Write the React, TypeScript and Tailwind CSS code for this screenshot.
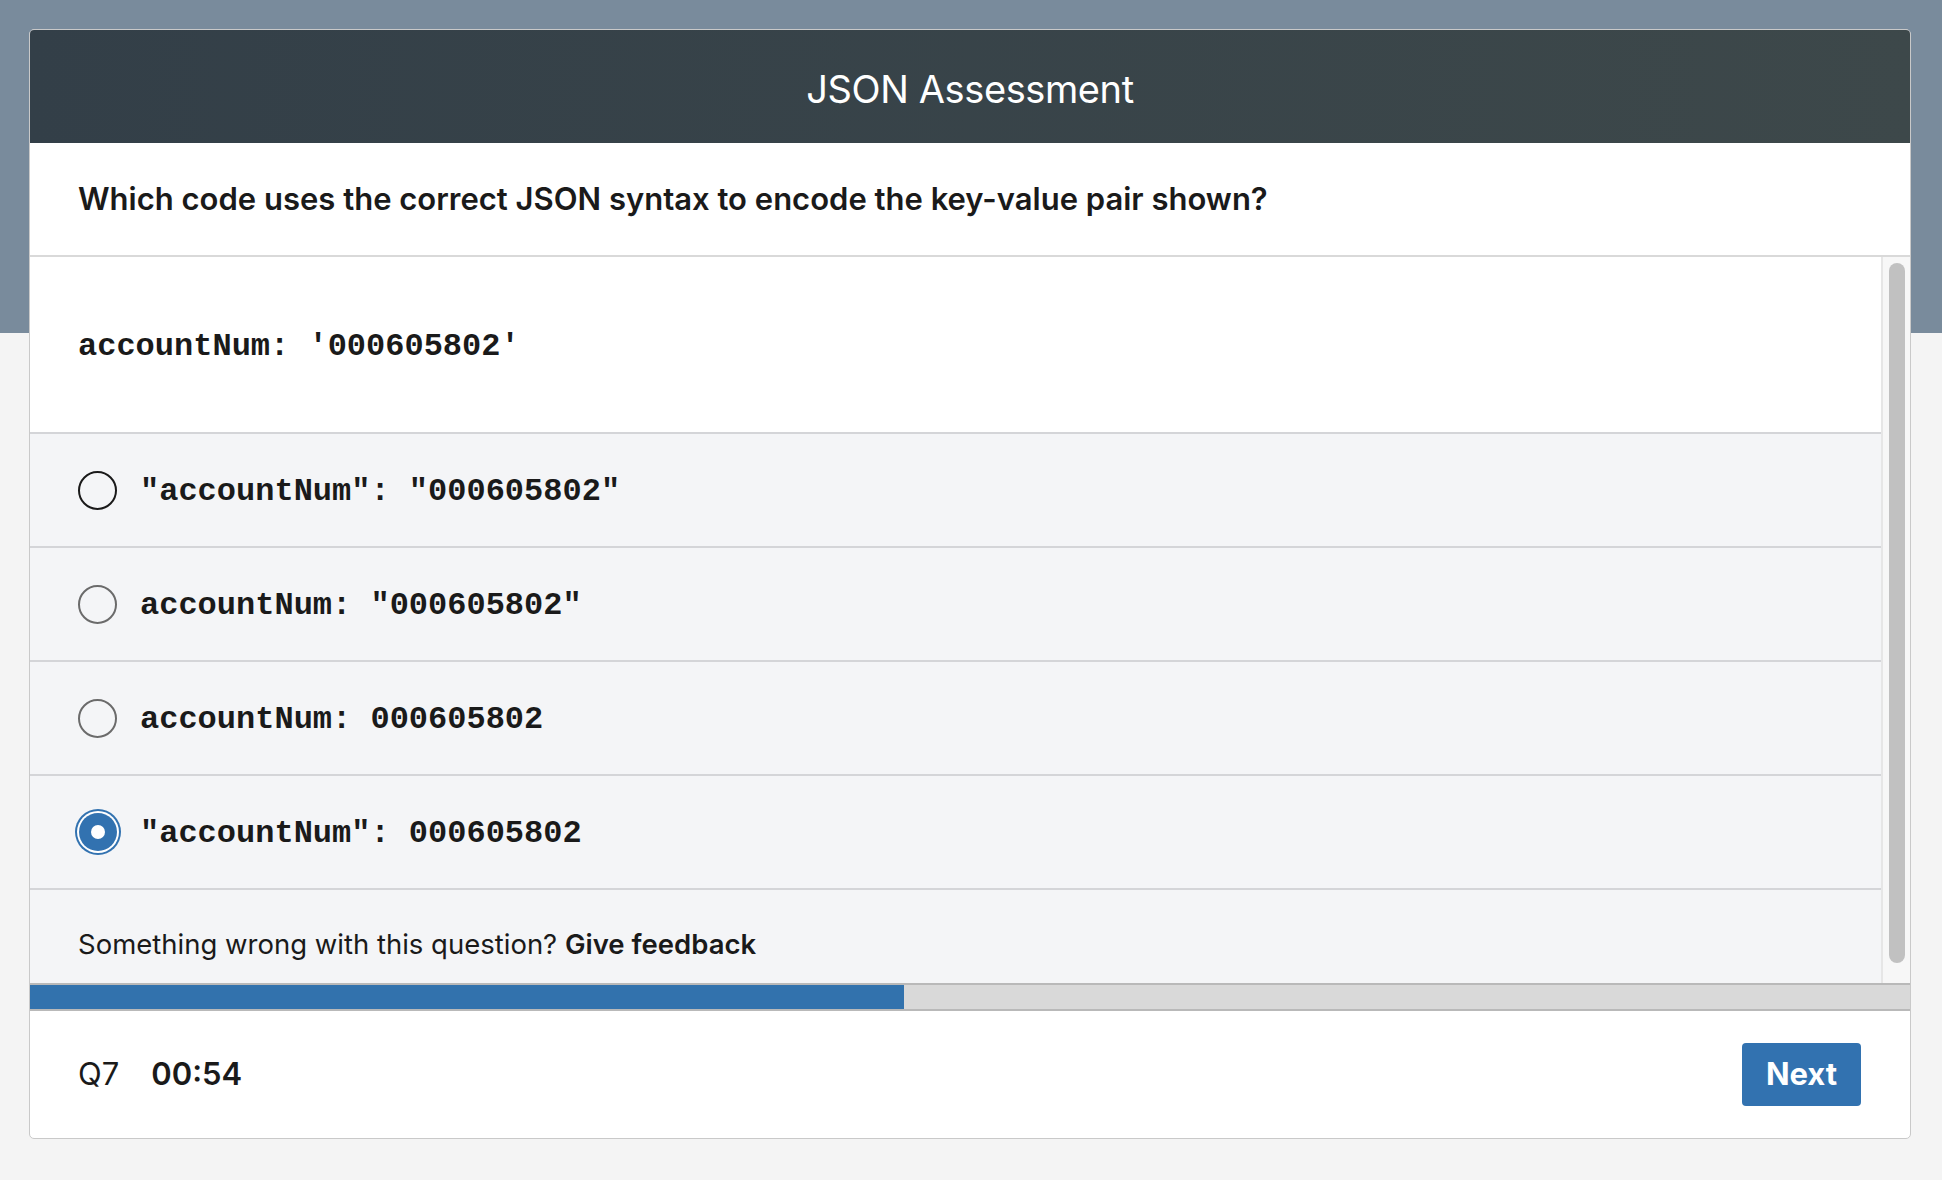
import React from "react";

const sans = { fontFamily: "Inter, 'Liberation Sans', Arial, sans-serif" };
const mono = { fontFamily: "'Liberation Mono', 'Courier New', monospace" };

function Radio({ state }: { state: "dark" | "gray" | "selected" }) {
  if (state === "selected") {
    return (
      <div className="w-[39px] h-[39px] flex items-center justify-center shrink-0">
        <div className="w-[46px] h-[46px] rounded-full bg-[#3272b0] flex items-center justify-center shrink-0">
          <div className="w-[42px] h-[42px] rounded-full bg-white flex items-center justify-center">
            <div className="w-[38px] h-[38px] rounded-full bg-[#3272b0] flex items-center justify-center">
              <div className="w-[14px] h-[14px] rounded-full bg-white" />
            </div>
          </div>
        </div>
      </div>
    );
  }
  return (
    <div
      className={
        state === "dark"
          ? "w-[39px] h-[39px] rounded-full border-2 border-[#1a1a1a] shrink-0"
          : "w-[39px] h-[39px] rounded-full border-2 border-[#6b6b6b] shrink-0"
      }
    />
  );
}

function Option({ text, state }: { text: string; state: "dark" | "gray" | "selected" }) {
  return (
    <div className="h-[114px] border-b-2 border-[#d4d5d8] bg-[#f4f5f7] flex items-center pl-[48px] gap-[23px]">
      <Radio state={state} />
      <span className="text-[32px] font-bold text-[#1a1a1a] whitespace-pre pt-[3px]" style={mono}>
        {text}
      </span>
    </div>
  );
}

export default function App() {
  return (
    <div
      className="w-full h-[1180px] bg-[linear-gradient(to_bottom,#798b9c_0px,#798b9c_333px,#f4f4f4_333px)] pt-[29px]"
      style={sans}
    >
      <div className="ml-[29px] w-[1882px] rounded-[5px] border border-[#c9c9c9] overflow-hidden bg-white">
        <div className="h-[113px] bg-[linear-gradient(to_right,#333f48,#3d484a)] flex items-center justify-center pt-[6px]">
          <h1 className="text-[38px] text-white font-normal tracking-[-0.4px]">JSON Assessment</h1>
        </div>
        <div className="h-[114px] border-b-2 border-[#d9d9d9] flex items-center pl-[48px]">
          <p className="text-[31px] font-semibold text-[#1a1a1a] tracking-[0px]">
            Which code uses the correct JSON syntax to encode the key-value pair shown?
          </p>
        </div>
        <div className="flex h-[726px]">
          <div className="flex-1 flex flex-col">
            <div className="h-[177px] border-b-2 border-[#d4d5d8] bg-white flex items-center pl-[48px] pt-[5px]">
              <span className="text-[32px] font-bold text-[#1a1a1a] whitespace-pre" style={mono}>
                {"accountNum: '000605802'"}
              </span>
            </div>
            <Option text={'"accountNum": "000605802"'} state="dark" />
            <Option text={'accountNum: "000605802"'} state="gray" />
            <Option text={"accountNum: 000605802"} state="gray" />
            <Option text={'"accountNum": 000605802'} state="selected" />
            <div className="flex-1 bg-[#f4f5f7] flex items-center pl-[48px] pt-[16px]">
              <span className="text-[27.5px] text-[#1a1a1a]">
                Something wrong with this question? <span className="font-semibold">Give feedback</span>
              </span>
            </div>
          </div>
          <div className="w-[29px] bg-[#f7f7f7] border-l-2 border-[#e6e6e6] pt-[6px] pb-[20px] flex justify-center">
            <div className="w-[16px] h-full rounded-full bg-[#c1c1c1]" />
          </div>
        </div>
        <div className="h-[28px] border-y-2 border-[#b9b9b9] bg-[#d9d9d9]">
          <div className="h-full bg-[#3272ad]" style={{ width: "46.5%" }} />
        </div>
        <div className="h-[127px] flex items-center justify-between pl-[48px] pr-[49px]">
          <div className="flex items-center gap-[32px] text-[31px] text-[#1a1a1a]">
            <span>Q7</span>
            <span className="font-semibold">00:54</span>
          </div>
          <button className="w-[119px] h-[63px] rounded-[4px] bg-[#3272b0] text-white text-[31px] font-bold">
            Next
          </button>
        </div>
      </div>
    </div>
  );
}
